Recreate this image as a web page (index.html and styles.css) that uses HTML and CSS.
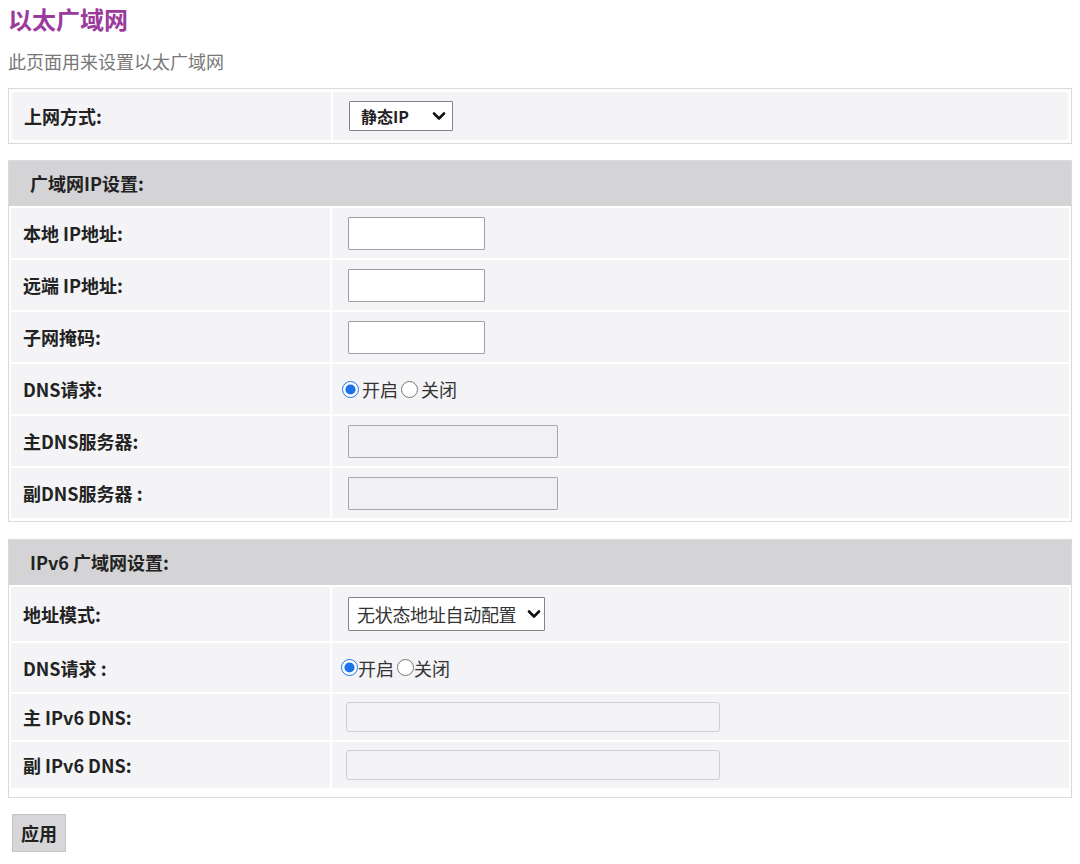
FILE: index.html
```html
<!DOCTYPE html>
<html lang="zh-CN">
<head>
<meta charset="utf-8">
<title>以太广域网</title>
<link rel="stylesheet" href="styles.css">
</head>
<body>
<h1 class="title">以太广域网</h1>
<p class="subtitle">此页面用来设置以太广域网</p>

<div class="box box-mode">
  <div class="grid">
    <div class="cell label">上网方式:</div>
    <div class="cell value">
      <span class="select-wrap sel-small">
        <select class="select"><option>静态IP</option></select>
        <svg class="chev" width="14" height="10" viewBox="0 0 14 10"><path d="M2 2.5 L7 7.5 L12 2.5" fill="none" stroke="#111" stroke-width="2.6" stroke-linecap="round" stroke-linejoin="round"/></svg>
      </span>
    </div>
  </div>
</div>

<div class="box box-wan">
  <div class="head">广域网IP设置:</div>
  <div class="grid">
    <div class="cell label">本地 IP地址:</div>
    <div class="cell value"><input class="text" type="text"></div>
    <div class="cell label">远端 IP地址:</div>
    <div class="cell value"><input class="text" type="text"></div>
    <div class="cell label">子网掩码:</div>
    <div class="cell value"><input class="text" type="text"></div>
    <div class="cell label">DNS请求:</div>
    <div class="cell value radios">
      <label class="opt"><input type="radio" name="dns4" checked>开启</label>
      <label class="opt"><input type="radio" name="dns4">关闭</label>
    </div>
    <div class="cell label">主DNS服务器:</div>
    <div class="cell value"><input class="text wide" type="text" disabled></div>
    <div class="cell label">副DNS服务器 :</div>
    <div class="cell value"><input class="text wide" type="text" disabled></div>
  </div>
</div>

<div class="box box-v6">
  <div class="head">IPv6 广域网设置:</div>
  <div class="grid v6grid">
    <div class="cell label">地址模式:</div>
    <div class="cell value">
      <span class="select-wrap sel-wide">
        <select class="select"><option>无状态地址自动配置</option></select>
        <svg class="chev" width="14" height="10" viewBox="0 0 14 10"><path d="M2 2.5 L7 7.5 L12 2.5" fill="none" stroke="#111" stroke-width="2.6" stroke-linecap="round" stroke-linejoin="round"/></svg>
      </span>
    </div>
    <div class="cell label">DNS请求 :</div>
    <div class="cell value radios tight">
      <label class="opt"><input type="radio" name="dns6" checked>开启</label>
      <label class="opt"><input type="radio" name="dns6">关闭</label>
    </div>
    <div class="cell label">主 IPv6 DNS:</div>
    <div class="cell value v6in"><input class="text long" type="text" disabled></div>
    <div class="cell label">副 IPv6 DNS:</div>
    <div class="cell value v6in"><input class="text long" type="text" disabled></div>
  </div>
</div>

<div class="actions"><button class="apply" type="button">应用</button></div>
</body>
</html>
```

FILE: styles.css
```css
html, body {
  margin: 0;
  padding: 0;
  background: #ffffff;
}
body {
  padding: 0 8px;
  font-family: "Noto Sans CJK SC", "Liberation Sans", sans-serif;
  color: #222;
}
.title {
  margin: 0;
  padding-top: 2px;
  height: 34px;
  line-height: 34px;
  font-size: 24px;
  font-weight: 700;
  color: #9b3a9c;
}
.subtitle {
  margin: 0;
  height: 50px;
  line-height: 50px;
  font-size: 18px;
  color: #777;
}
.box {
  border: 1px solid #dadada;
  background: #fff;
}
.box-mode {
  margin-top: 2px;
  padding: 3px;
}
.box-wan {
  margin-top: 16px;
}
.box-v6 {
  margin-top: 17px;
}
.head {
  height: 45px;
  line-height: 45px;
  background: #d4d4d6;
  padding-left: 21px;
  font-size: 18px;
  font-weight: 700;
  color: #222;
}
.grid {
  display: grid;
  grid-template-columns: 319px 1fr;
  gap: 2px;
}
.box-wan .grid,
.box-v6 .grid {
  padding: 2px 2px 3px;
  grid-auto-rows: 50px;
}
.box-v6 .grid {
  padding-bottom: 9px;
}
.box-mode .grid {
  grid-auto-rows: 48px;
}
.v6grid {
  grid-template-rows: 54px 49px 46px 46px;
}
.cell {
  background: #f4f4f6;
  display: flex;
  align-items: center;
}
.label {
  padding-left: 12px;
  font-size: 18px;
  font-weight: 700;
  color: #222;
}
.value {
  padding-left: 16px;
}
.v6in {
  padding-left: 14px;
}
.text {
  box-sizing: border-box;
  width: 137px;
  height: 33px;
  margin: 0;
  border: 1px solid #9aa0a4;
  border-radius: 1px;
  background: #fff;
  font-size: 15px;
}
.text.wide {
  width: 210px;
  height: 33px;
  background: #f1f1f3;
  border-color: #a6aaae;
}
.text.long {
  width: 374px;
  height: 30px;
  background: #f3f3f5;
  border: 1px solid #cfcfd2;
  border-radius: 3px;
}
.select-wrap {
  position: relative;
  display: inline-block;
}
.select {
  appearance: none;
  -webkit-appearance: none;
  box-sizing: border-box;
  margin: 0;
  height: 30px;
  border: 1px solid #7e8488;
  border-radius: 1px;
  background: #fff;
  color: #222;
  font-family: "Noto Sans CJK SC", "Liberation Sans", sans-serif;
  font-size: 16px;
  padding: 0 0 0 8px;
}
.sel-small .select {
  width: 104px;
  font-weight: 700;
  font-size: 16px;
  padding-left: 11px;
}
.sel-wide .select {
  width: 197px;
  height: 34px;
  font-size: 18px;
  letter-spacing: -0.3px;
  color: #333;
}
.chev {
  position: absolute;
  right: 7px;
  top: 50%;
  margin-top: -5px;
  pointer-events: none;
}
.sel-wide .chev {
  right: 4px;
}
.radios {
  padding-left: 9px;
  font-size: 18px;
  color: #333;
  gap: 0;
}
.opt {
  display: inline-flex;
  align-items: center;
}
.opt input {
  width: 17px;
  height: 17px;
  margin: 0 3px 0 1px;
  accent-color: #1a73e8;
}
.radios .opt + .opt input {
  margin-left: 3px;
}
.tight {
  padding-left: 8px;
}
.tight .opt input {
  margin-right: 0;
}
.actions {
  padding-top: 16px;
  padding-left: 4px;
}
.apply {
  height: 38px;
  width: 54px;
  border: 1px solid #c4c4c4;
  background: #d7d7d9;
  border-radius: 0;
  font-family: "Noto Sans CJK SC", "Liberation Sans", sans-serif;
  font-size: 18px;
  font-weight: 700;
  color: #222;
  padding: 0;
}
```
